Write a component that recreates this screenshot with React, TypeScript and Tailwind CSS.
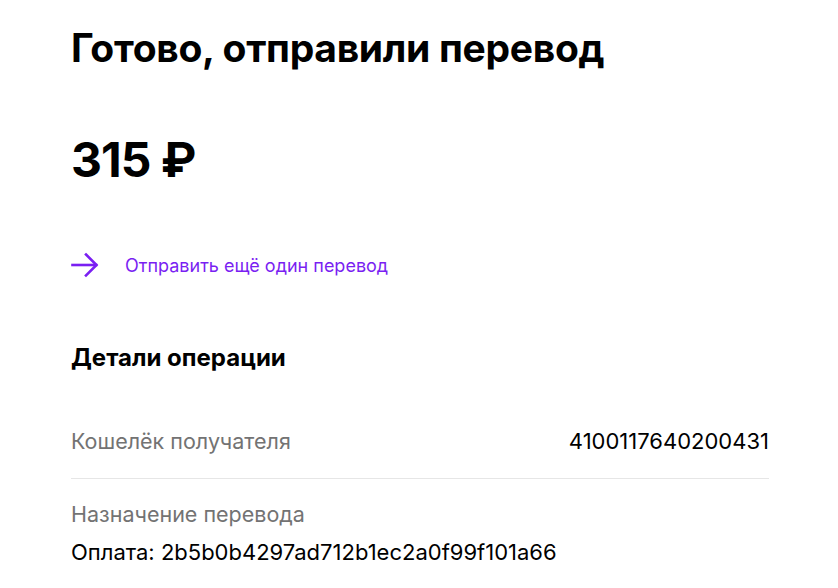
const details = [
    { label: 'Кошелёк получателя', value: '4100117640200431', inline: true },
    { label: 'Назначение перевода', value: 'Оплата: 2b5b0b4297ad712b1ec2a0f99f101a66', inline: false },
];

function Arrow() {
    return (
        <svg width="28" height="26" viewBox="0 0 28 26" fill="none" stroke="currentColor" strokeWidth="2.6" strokeLinecap="square">
            <path d="M1.5 13H25" />
            <path d="M15 2.5L25.5 13L15 23.5" />
        </svg>
    );
}

export default function App() {
    return (
        <div className="min-h-screen bg-white font-['Inter',sans-serif] text-black">
            <div className="w-[698px] ml-[71px] pt-[24px]">
                <h1 className="text-[39px] font-bold leading-[48px] tracking-[-0.3px]">Готово, отправили перевод</h1>

                <div className="mt-[60px] text-[48px] font-bold leading-[56px] tracking-[-1px]">315 ₽</div>

                <a href="#" className="mt-[62px] flex items-center h-[30px] text-[#7a1ff2]">
                    <Arrow />
                    <span className="ml-[26px] text-[18px]">Отправить ещё один перевод</span>
                </a>

                <h2 className="mt-[63px] text-[24px] font-bold leading-[30px]">Детали операции</h2>

                <div className="mt-[54px]">
                    {details.map((d, i) =>
                        d.inline ? (
                            <div key={i} className="flex justify-between items-center pb-[23px] border-b border-[#e6e6e6] leading-[28px]">
                                <span className="text-[21.5px] text-[#737373]">{d.label}</span>
                                <span className="text-[22px]">{d.value}</span>
                            </div>
                        ) : (
                            <div key={i} className="pt-[21px] leading-[28px]">
                                <div className="text-[21.5px] text-[#737373]">{d.label}</div>
                                <div className="mt-[10px] text-[22px]">{d.value}</div>
                            </div>
                        )
                    )}
                </div>
            </div>
        </div>
    );
}
